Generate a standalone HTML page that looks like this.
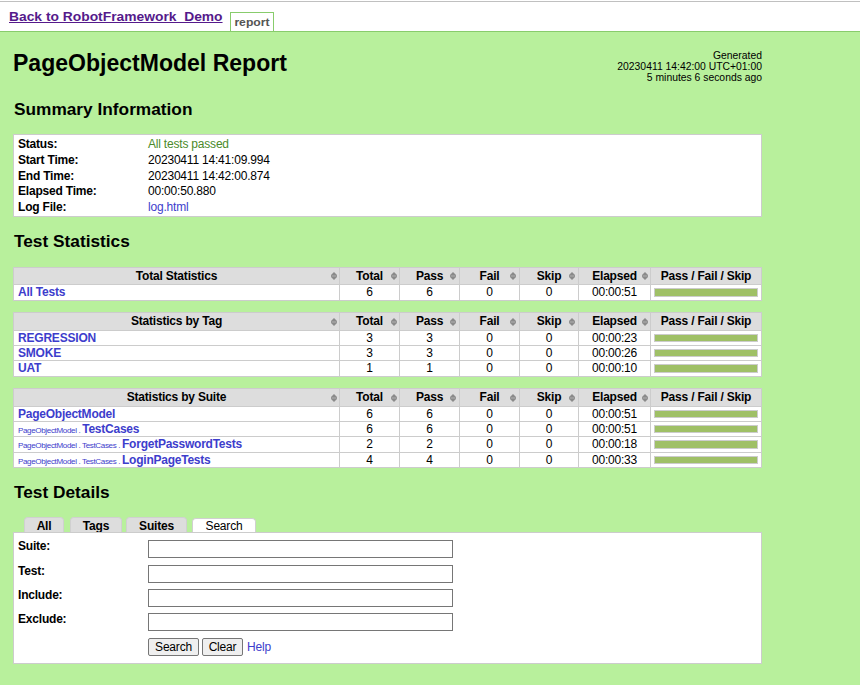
<!DOCTYPE html>
<html><head><meta charset="utf-8"><style>
html,body{margin:0;padding:0;}
body{width:860px;height:685px;overflow:hidden;background:#fff;font-family:"Liberation Sans", sans-serif;position:relative;color:#000;font-size:12px;letter-spacing:-0.2px;}
.r{position:absolute;}
.t{position:absolute;white-space:nowrap;line-height:13px;}
.b{font-weight:bold;}
.back{letter-spacing:0;font-size:12px;font-weight:bold;color:#551a8b;text-decoration:underline;transform:scaleX(1.152);transform-origin:0 0;}
.tabt{letter-spacing:0;font-size:11.5px;font-weight:bold;color:#555;transform:scaleX(1.06);transform-origin:50% 0;}
.h1{letter-spacing:0;font-size:23.04px;font-weight:bold;line-height:27px;}
.h2{letter-spacing:0;font-size:17.28px;font-weight:bold;line-height:20px;}
.gen{letter-spacing:0;font-size:10.37px;line-height:11px;text-align:right;}
.hc{text-align:center;}
.lk{color:#3d3dcc;font-weight:bold;}
.lk2{color:#3d3dcc;}
.pn{font-size:8.064px;letter-spacing:-0.36px;color:#3d3dcc;font-weight:normal;}
.nm .lk{font-weight:bold;}
.nm .sn{letter-spacing:-0.24px;}
.btn{}
</style></head><body>
<div class="r" style="left:0px;top:1px;width:860px;height:1px;background:#c0c0c0;"></div><div class="t back" style="left:9px;top:11px;">Back to RobotFramework_Demo</div><div class="r" style="left:230px;top:12px;width:44px;height:19px;background:#fff;border:1px solid #88cc6c;border-bottom:none;box-sizing:border-box;"></div><div class="t tabt" style="left:230px;top:16px;width:44px;text-align:center;">report</div><div class="r" style="left:0px;top:31px;width:860px;height:1px;background:#88cc6c;"></div><div class="r" style="left:0px;top:32px;width:860px;height:653px;background:#b8f09c;"></div><div class="t h1" style="left:13px;top:50px;">PageObjectModel Report</div><div class="t gen" style="right:98px;top:50px;">Generated<br>20230411 14:42:00 UTC+01:00<br>5 minutes 6 seconds ago</div><div class="t h2" style="left:14px;top:99px;">Summary Information</div><div class="r" style="left:13px;top:134px;width:749px;height:83px;background:#fff;border:1px solid #cccccc;box-sizing:border-box;"></div><div class="t b" style="left:18px;top:138px;">Status:</div><div class="t " style="left:148px;top:138px;"><span style="color:#4a8a2a">All tests passed</span></div><div class="t b" style="left:18px;top:154px;">Start Time:</div><div class="t " style="left:148px;top:154px;">20230411 14:41:09.994</div><div class="t b" style="left:18px;top:170px;">End Time:</div><div class="t " style="left:148px;top:170px;">20230411 14:42:00.874</div><div class="t b" style="left:18px;top:185px;">Elapsed Time:</div><div class="t " style="left:148px;top:185px;">00:00:50.880</div><div class="t b" style="left:18px;top:201px;">Log File:</div><div class="t " style="left:148px;top:201px;"><span class="lk2">log.html</span></div><div class="t h2" style="left:14px;top:231px;">Test Statistics</div><div class="r" style="left:13px;top:267px;width:749px;height:34px;background:#fff;"></div><div class="r" style="left:13px;top:267px;width:749px;height:18px;background:#ddd;"></div><div class="r" style="left:13px;top:267px;width:749px;height:1px;background:#cccccc;"></div><div class="r" style="left:13px;top:284px;width:749px;height:1px;background:#cccccc;"></div><div class="r" style="left:13px;top:300px;width:749px;height:1px;background:#cccccc;"></div><div class="r" style="left:13px;top:267px;width:1px;height:34px;background:#cccccc;"></div><div class="r" style="left:339px;top:267px;width:1px;height:34px;background:#cccccc;"></div><div class="r" style="left:399px;top:267px;width:1px;height:34px;background:#cccccc;"></div><div class="r" style="left:459px;top:267px;width:1px;height:34px;background:#cccccc;"></div><div class="r" style="left:519px;top:267px;width:1px;height:34px;background:#cccccc;"></div><div class="r" style="left:578px;top:267px;width:1px;height:34px;background:#cccccc;"></div><div class="r" style="left:650px;top:267px;width:1px;height:34px;background:#cccccc;"></div><div class="r" style="left:761px;top:267px;width:1px;height:34px;background:#cccccc;"></div><div class="t b hc" style="left:14px;top:268px;width:325px;height:16px;line-height:16px;">Total Statistics</div><svg class="r" style="left:331px;top:272px" width="6" height="8" viewBox="0 0 6 8"><path d="M3 0 L6 3 L6 5 L3 8 L0 5 L0 3 Z" fill="#8a8a8a"/><rect x="0.5" y="3.5" width="5" height="1" fill="#b0b0b0"/></svg><div class="t b hc" style="left:340px;top:268px;width:59px;height:16px;line-height:16px;">Total</div><svg class="r" style="left:391px;top:272px" width="6" height="8" viewBox="0 0 6 8"><path d="M3 0 L6 3 L6 5 L3 8 L0 5 L0 3 Z" fill="#8a8a8a"/><rect x="0.5" y="3.5" width="5" height="1" fill="#b0b0b0"/></svg><div class="t b hc" style="left:400px;top:268px;width:59px;height:16px;line-height:16px;">Pass</div><svg class="r" style="left:450px;top:272px" width="6" height="8" viewBox="0 0 6 8"><path d="M3 0 L6 3 L6 5 L3 8 L0 5 L0 3 Z" fill="#8a8a8a"/><rect x="0.5" y="3.5" width="5" height="1" fill="#b0b0b0"/></svg><div class="t b hc" style="left:460px;top:268px;width:59px;height:16px;line-height:16px;">Fail</div><svg class="r" style="left:510px;top:272px" width="6" height="8" viewBox="0 0 6 8"><path d="M3 0 L6 3 L6 5 L3 8 L0 5 L0 3 Z" fill="#8a8a8a"/><rect x="0.5" y="3.5" width="5" height="1" fill="#b0b0b0"/></svg><div class="t b hc" style="left:520px;top:268px;width:58px;height:16px;line-height:16px;">Skip</div><svg class="r" style="left:569px;top:272px" width="6" height="8" viewBox="0 0 6 8"><path d="M3 0 L6 3 L6 5 L3 8 L0 5 L0 3 Z" fill="#8a8a8a"/><rect x="0.5" y="3.5" width="5" height="1" fill="#b0b0b0"/></svg><div class="t b hc" style="left:579px;top:268px;width:71px;height:16px;line-height:16px;">Elapsed</div><svg class="r" style="left:642px;top:272px" width="6" height="8" viewBox="0 0 6 8"><path d="M3 0 L6 3 L6 5 L3 8 L0 5 L0 3 Z" fill="#8a8a8a"/><rect x="0.5" y="3.5" width="5" height="1" fill="#b0b0b0"/></svg><div class="t b hc" style="left:651px;top:268px;width:110px;height:16px;line-height:16px;">Pass / Fail / Skip</div><div class="t nm" style="left:18px;top:285px;height:15px;line-height:15px;"><span class="lk">All Tests</span></div><div class="t hc" style="left:340px;top:285px;width:59px;height:15px;line-height:15px;">6</div><div class="t hc" style="left:400px;top:285px;width:59px;height:15px;line-height:15px;">6</div><div class="t hc" style="left:460px;top:285px;width:59px;height:15px;line-height:15px;">0</div><div class="t hc" style="left:520px;top:285px;width:58px;height:15px;line-height:15px;">0</div><div class="t hc" style="left:579px;top:285px;width:71px;height:15px;line-height:15px;">00:00:51</div><div class="r" style="left:654px;top:288px;width:104px;height:9px;background:#9fc066;border:1px solid #cccccc;box-sizing:border-box;"></div><div class="r" style="left:13px;top:312px;width:749px;height:65px;background:#fff;"></div><div class="r" style="left:13px;top:312px;width:749px;height:19px;background:#ddd;"></div><div class="r" style="left:13px;top:312px;width:749px;height:1px;background:#cccccc;"></div><div class="r" style="left:13px;top:330px;width:749px;height:1px;background:#cccccc;"></div><div class="r" style="left:13px;top:345px;width:749px;height:1px;background:#cccccc;"></div><div class="r" style="left:13px;top:360px;width:749px;height:1px;background:#cccccc;"></div><div class="r" style="left:13px;top:376px;width:749px;height:1px;background:#cccccc;"></div><div class="r" style="left:13px;top:312px;width:1px;height:65px;background:#cccccc;"></div><div class="r" style="left:339px;top:312px;width:1px;height:65px;background:#cccccc;"></div><div class="r" style="left:399px;top:312px;width:1px;height:65px;background:#cccccc;"></div><div class="r" style="left:459px;top:312px;width:1px;height:65px;background:#cccccc;"></div><div class="r" style="left:519px;top:312px;width:1px;height:65px;background:#cccccc;"></div><div class="r" style="left:578px;top:312px;width:1px;height:65px;background:#cccccc;"></div><div class="r" style="left:650px;top:312px;width:1px;height:65px;background:#cccccc;"></div><div class="r" style="left:761px;top:312px;width:1px;height:65px;background:#cccccc;"></div><div class="t b hc" style="left:14px;top:313px;width:325px;height:17px;line-height:17px;">Statistics by Tag</div><svg class="r" style="left:331px;top:318px" width="6" height="8" viewBox="0 0 6 8"><path d="M3 0 L6 3 L6 5 L3 8 L0 5 L0 3 Z" fill="#8a8a8a"/><rect x="0.5" y="3.5" width="5" height="1" fill="#b0b0b0"/></svg><div class="t b hc" style="left:340px;top:313px;width:59px;height:17px;line-height:17px;">Total</div><svg class="r" style="left:391px;top:318px" width="6" height="8" viewBox="0 0 6 8"><path d="M3 0 L6 3 L6 5 L3 8 L0 5 L0 3 Z" fill="#8a8a8a"/><rect x="0.5" y="3.5" width="5" height="1" fill="#b0b0b0"/></svg><div class="t b hc" style="left:400px;top:313px;width:59px;height:17px;line-height:17px;">Pass</div><svg class="r" style="left:450px;top:318px" width="6" height="8" viewBox="0 0 6 8"><path d="M3 0 L6 3 L6 5 L3 8 L0 5 L0 3 Z" fill="#8a8a8a"/><rect x="0.5" y="3.5" width="5" height="1" fill="#b0b0b0"/></svg><div class="t b hc" style="left:460px;top:313px;width:59px;height:17px;line-height:17px;">Fail</div><svg class="r" style="left:510px;top:318px" width="6" height="8" viewBox="0 0 6 8"><path d="M3 0 L6 3 L6 5 L3 8 L0 5 L0 3 Z" fill="#8a8a8a"/><rect x="0.5" y="3.5" width="5" height="1" fill="#b0b0b0"/></svg><div class="t b hc" style="left:520px;top:313px;width:58px;height:17px;line-height:17px;">Skip</div><svg class="r" style="left:569px;top:318px" width="6" height="8" viewBox="0 0 6 8"><path d="M3 0 L6 3 L6 5 L3 8 L0 5 L0 3 Z" fill="#8a8a8a"/><rect x="0.5" y="3.5" width="5" height="1" fill="#b0b0b0"/></svg><div class="t b hc" style="left:579px;top:313px;width:71px;height:17px;line-height:17px;">Elapsed</div><svg class="r" style="left:642px;top:318px" width="6" height="8" viewBox="0 0 6 8"><path d="M3 0 L6 3 L6 5 L3 8 L0 5 L0 3 Z" fill="#8a8a8a"/><rect x="0.5" y="3.5" width="5" height="1" fill="#b0b0b0"/></svg><div class="t b hc" style="left:651px;top:313px;width:110px;height:17px;line-height:17px;">Pass / Fail / Skip</div><div class="t nm" style="left:18px;top:331px;height:14px;line-height:14px;"><span class="lk">REGRESSION</span></div><div class="t hc" style="left:340px;top:331px;width:59px;height:14px;line-height:14px;">3</div><div class="t hc" style="left:400px;top:331px;width:59px;height:14px;line-height:14px;">3</div><div class="t hc" style="left:460px;top:331px;width:59px;height:14px;line-height:14px;">0</div><div class="t hc" style="left:520px;top:331px;width:58px;height:14px;line-height:14px;">0</div><div class="t hc" style="left:579px;top:331px;width:71px;height:14px;line-height:14px;">00:00:23</div><div class="r" style="left:654px;top:334px;width:104px;height:8px;background:#9fc066;border:1px solid #cccccc;box-sizing:border-box;"></div><div class="t nm" style="left:18px;top:346px;height:14px;line-height:14px;"><span class="lk">SMOKE</span></div><div class="t hc" style="left:340px;top:346px;width:59px;height:14px;line-height:14px;">3</div><div class="t hc" style="left:400px;top:346px;width:59px;height:14px;line-height:14px;">3</div><div class="t hc" style="left:460px;top:346px;width:59px;height:14px;line-height:14px;">0</div><div class="t hc" style="left:520px;top:346px;width:58px;height:14px;line-height:14px;">0</div><div class="t hc" style="left:579px;top:346px;width:71px;height:14px;line-height:14px;">00:00:26</div><div class="r" style="left:654px;top:349px;width:104px;height:8px;background:#9fc066;border:1px solid #cccccc;box-sizing:border-box;"></div><div class="t nm" style="left:18px;top:361px;height:15px;line-height:15px;"><span class="lk">UAT</span></div><div class="t hc" style="left:340px;top:361px;width:59px;height:15px;line-height:15px;">1</div><div class="t hc" style="left:400px;top:361px;width:59px;height:15px;line-height:15px;">1</div><div class="t hc" style="left:460px;top:361px;width:59px;height:15px;line-height:15px;">0</div><div class="t hc" style="left:520px;top:361px;width:58px;height:15px;line-height:15px;">0</div><div class="t hc" style="left:579px;top:361px;width:71px;height:15px;line-height:15px;">00:00:10</div><div class="r" style="left:654px;top:364px;width:104px;height:9px;background:#9fc066;border:1px solid #cccccc;box-sizing:border-box;"></div><div class="r" style="left:13px;top:388px;width:749px;height:80px;background:#fff;"></div><div class="r" style="left:13px;top:388px;width:749px;height:19px;background:#ddd;"></div><div class="r" style="left:13px;top:388px;width:749px;height:1px;background:#cccccc;"></div><div class="r" style="left:13px;top:406px;width:749px;height:1px;background:#cccccc;"></div><div class="r" style="left:13px;top:421px;width:749px;height:1px;background:#cccccc;"></div><div class="r" style="left:13px;top:436px;width:749px;height:1px;background:#cccccc;"></div><div class="r" style="left:13px;top:452px;width:749px;height:1px;background:#cccccc;"></div><div class="r" style="left:13px;top:467px;width:749px;height:1px;background:#cccccc;"></div><div class="r" style="left:13px;top:388px;width:1px;height:80px;background:#cccccc;"></div><div class="r" style="left:339px;top:388px;width:1px;height:80px;background:#cccccc;"></div><div class="r" style="left:399px;top:388px;width:1px;height:80px;background:#cccccc;"></div><div class="r" style="left:459px;top:388px;width:1px;height:80px;background:#cccccc;"></div><div class="r" style="left:519px;top:388px;width:1px;height:80px;background:#cccccc;"></div><div class="r" style="left:578px;top:388px;width:1px;height:80px;background:#cccccc;"></div><div class="r" style="left:650px;top:388px;width:1px;height:80px;background:#cccccc;"></div><div class="r" style="left:761px;top:388px;width:1px;height:80px;background:#cccccc;"></div><div class="t b hc" style="left:14px;top:389px;width:325px;height:17px;line-height:17px;">Statistics by Suite</div><svg class="r" style="left:331px;top:394px" width="6" height="8" viewBox="0 0 6 8"><path d="M3 0 L6 3 L6 5 L3 8 L0 5 L0 3 Z" fill="#8a8a8a"/><rect x="0.5" y="3.5" width="5" height="1" fill="#b0b0b0"/></svg><div class="t b hc" style="left:340px;top:389px;width:59px;height:17px;line-height:17px;">Total</div><svg class="r" style="left:391px;top:394px" width="6" height="8" viewBox="0 0 6 8"><path d="M3 0 L6 3 L6 5 L3 8 L0 5 L0 3 Z" fill="#8a8a8a"/><rect x="0.5" y="3.5" width="5" height="1" fill="#b0b0b0"/></svg><div class="t b hc" style="left:400px;top:389px;width:59px;height:17px;line-height:17px;">Pass</div><svg class="r" style="left:450px;top:394px" width="6" height="8" viewBox="0 0 6 8"><path d="M3 0 L6 3 L6 5 L3 8 L0 5 L0 3 Z" fill="#8a8a8a"/><rect x="0.5" y="3.5" width="5" height="1" fill="#b0b0b0"/></svg><div class="t b hc" style="left:460px;top:389px;width:59px;height:17px;line-height:17px;">Fail</div><svg class="r" style="left:510px;top:394px" width="6" height="8" viewBox="0 0 6 8"><path d="M3 0 L6 3 L6 5 L3 8 L0 5 L0 3 Z" fill="#8a8a8a"/><rect x="0.5" y="3.5" width="5" height="1" fill="#b0b0b0"/></svg><div class="t b hc" style="left:520px;top:389px;width:58px;height:17px;line-height:17px;">Skip</div><svg class="r" style="left:569px;top:394px" width="6" height="8" viewBox="0 0 6 8"><path d="M3 0 L6 3 L6 5 L3 8 L0 5 L0 3 Z" fill="#8a8a8a"/><rect x="0.5" y="3.5" width="5" height="1" fill="#b0b0b0"/></svg><div class="t b hc" style="left:579px;top:389px;width:71px;height:17px;line-height:17px;">Elapsed</div><svg class="r" style="left:642px;top:394px" width="6" height="8" viewBox="0 0 6 8"><path d="M3 0 L6 3 L6 5 L3 8 L0 5 L0 3 Z" fill="#8a8a8a"/><rect x="0.5" y="3.5" width="5" height="1" fill="#b0b0b0"/></svg><div class="t b hc" style="left:651px;top:389px;width:110px;height:17px;line-height:17px;">Pass / Fail / Skip</div><div class="t nm" style="left:18px;top:407px;height:14px;line-height:14px;"><span class="lk sn">PageObjectModel</span></div><div class="t hc" style="left:340px;top:407px;width:59px;height:14px;line-height:14px;">6</div><div class="t hc" style="left:400px;top:407px;width:59px;height:14px;line-height:14px;">6</div><div class="t hc" style="left:460px;top:407px;width:59px;height:14px;line-height:14px;">0</div><div class="t hc" style="left:520px;top:407px;width:58px;height:14px;line-height:14px;">0</div><div class="t hc" style="left:579px;top:407px;width:71px;height:14px;line-height:14px;">00:00:51</div><div class="r" style="left:654px;top:410px;width:104px;height:8px;background:#9fc066;border:1px solid #cccccc;box-sizing:border-box;"></div><div class="t nm" style="left:18px;top:422px;height:14px;line-height:14px;"><span class="pn">PageObjectModel . </span><span class="lk sn">TestCases</span></div><div class="t hc" style="left:340px;top:422px;width:59px;height:14px;line-height:14px;">6</div><div class="t hc" style="left:400px;top:422px;width:59px;height:14px;line-height:14px;">6</div><div class="t hc" style="left:460px;top:422px;width:59px;height:14px;line-height:14px;">0</div><div class="t hc" style="left:520px;top:422px;width:58px;height:14px;line-height:14px;">0</div><div class="t hc" style="left:579px;top:422px;width:71px;height:14px;line-height:14px;">00:00:51</div><div class="r" style="left:654px;top:425px;width:104px;height:8px;background:#9fc066;border:1px solid #cccccc;box-sizing:border-box;"></div><div class="t nm" style="left:18px;top:437px;height:15px;line-height:15px;"><span class="pn">PageObjectModel . TestCases . </span><span class="lk sn">ForgetPasswordTests</span></div><div class="t hc" style="left:340px;top:437px;width:59px;height:15px;line-height:15px;">2</div><div class="t hc" style="left:400px;top:437px;width:59px;height:15px;line-height:15px;">2</div><div class="t hc" style="left:460px;top:437px;width:59px;height:15px;line-height:15px;">0</div><div class="t hc" style="left:520px;top:437px;width:58px;height:15px;line-height:15px;">0</div><div class="t hc" style="left:579px;top:437px;width:71px;height:15px;line-height:15px;">00:00:18</div><div class="r" style="left:654px;top:440px;width:104px;height:9px;background:#9fc066;border:1px solid #cccccc;box-sizing:border-box;"></div><div class="t nm" style="left:18px;top:453px;height:14px;line-height:14px;"><span class="pn">PageObjectModel . TestCases . </span><span class="lk sn">LoginPageTests</span></div><div class="t hc" style="left:340px;top:453px;width:59px;height:14px;line-height:14px;">4</div><div class="t hc" style="left:400px;top:453px;width:59px;height:14px;line-height:14px;">4</div><div class="t hc" style="left:460px;top:453px;width:59px;height:14px;line-height:14px;">0</div><div class="t hc" style="left:520px;top:453px;width:58px;height:14px;line-height:14px;">0</div><div class="t hc" style="left:579px;top:453px;width:71px;height:14px;line-height:14px;">00:00:33</div><div class="r" style="left:654px;top:456px;width:104px;height:8px;background:#9fc066;border:1px solid #cccccc;box-sizing:border-box;"></div><div class="t h2" style="left:14px;top:482px;">Test Details</div><div class="r" style="left:24px;top:517px;width:40px;height:16px;background:#ddd;border:1px solid #d0d0d0;border-bottom:none;box-sizing:border-box;border-radius:4px 4px 0 0;"></div><div class="t hc b" style="left:24px;top:520px;width:40px;">All</div><div class="r" style="left:70px;top:517px;width:52px;height:16px;background:#ddd;border:1px solid #d0d0d0;border-bottom:none;box-sizing:border-box;border-radius:4px 4px 0 0;"></div><div class="t hc b" style="left:70px;top:520px;width:52px;">Tags</div><div class="r" style="left:126px;top:517px;width:61px;height:16px;background:#ddd;border:1px solid #d0d0d0;border-bottom:none;box-sizing:border-box;border-radius:4px 4px 0 0;"></div><div class="t hc b" style="left:126px;top:520px;width:61px;">Suites</div><div class="r" style="left:192px;top:518px;width:64px;height:15px;background:#fff;border:1px solid #d0d0d0;border-bottom:none;box-sizing:border-box;border-radius:4px 4px 0 0;"></div><div class="t hc " style="left:192px;top:520px;width:64px;">Search</div><div class="r" style="left:13px;top:532px;width:749px;height:132px;background:#fff;border:1px solid #cccccc;box-sizing:border-box;"></div><div class="t b" style="left:18px;top:540px;">Suite:</div><div class="r" style="left:148px;top:540px;width:305px;height:18px;background:#fff;border:1px solid #767676;box-sizing:border-box;"></div><div class="t b" style="left:18px;top:565px;">Test:</div><div class="r" style="left:148px;top:565px;width:305px;height:18px;background:#fff;border:1px solid #767676;box-sizing:border-box;"></div><div class="t b" style="left:18px;top:589px;">Include:</div><div class="r" style="left:148px;top:589px;width:305px;height:18px;background:#fff;border:1px solid #767676;box-sizing:border-box;"></div><div class="t b" style="left:18px;top:613px;">Exclude:</div><div class="r" style="left:148px;top:613px;width:305px;height:18px;background:#fff;border:1px solid #767676;box-sizing:border-box;"></div><div class="r" style="left:148px;top:638px;width:51px;height:18px;background:#efefef;border:1px solid #767676;box-sizing:border-box;border-radius:2px;"></div><div class="t btn" style="left:148px;top:639px;width:51px;text-align:center;height:16px;line-height:16px;">Search</div><div class="r" style="left:202px;top:638px;width:41px;height:18px;background:#efefef;border:1px solid #767676;box-sizing:border-box;border-radius:2px;"></div><div class="t btn" style="left:202px;top:639px;width:41px;text-align:center;height:16px;line-height:16px;">Clear</div><div class="t btn" style="left:247px;top:639px;height:16px;line-height:16px;"><span class="lk2">Help</span></div>
</body></html>
